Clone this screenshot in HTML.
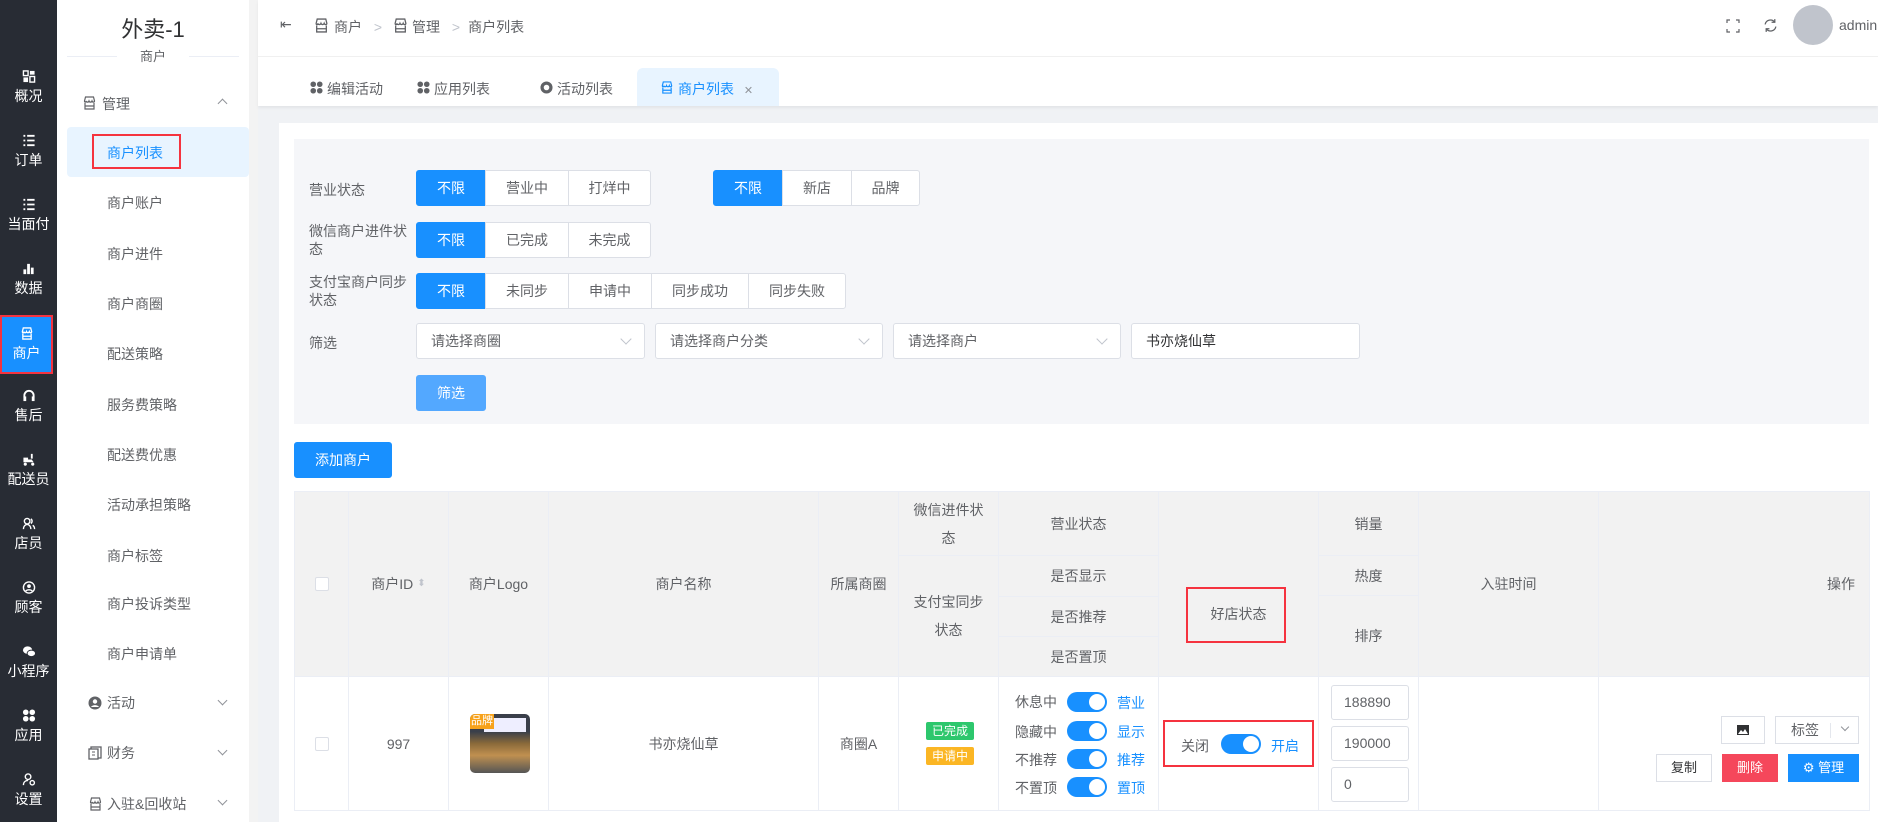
<!DOCTYPE html>
<html><head><meta charset="utf-8"><style>
*{box-sizing:border-box;margin:0;padding:0}
body{width:1878px;height:822px;overflow:hidden;background:#f0f2f5;font-family:"Liberation Sans","Noto Sans CJK SC",sans-serif;font-size:14px;color:#606266;position:relative}
.a{position:absolute}
.side{left:0;top:0;width:57px;height:822px;background:#282c34}
.si{position:absolute;left:0;width:57px;text-align:center;color:#fff;font-size:14px}
.si .ic{display:block;margin:0 auto 3px;width:14px;height:13px}
.sub{left:57px;top:0;width:192px;height:822px;background:#fff}
.mi{position:absolute;left:107px;color:#606266;font-size:14px}
.btn{position:absolute;height:36px;border:1px solid #dcdfe6;background:#fff;color:#606266;text-align:center;line-height:34px;font-size:14px}
.btn.on{background:#1890ff;border-color:#1890ff;color:#fff}
.sel{position:absolute;top:323px;height:36px;border:1px solid #dcdfe6;background:#fff;border-radius:3px;padding-left:14px;line-height:34px;color:#606266}
.sel.c:after{content:"";position:absolute;right:14px;top:11px;width:7px;height:7px;border-right:1px solid #c0c4cc;border-bottom:1px solid #c0c4cc;transform:rotate(45deg)}
.th{position:absolute;background:#f2f2f2;border-right:1px solid #ebeef5;border-bottom:1px solid #ebeef5;display:flex;align-items:center;justify-content:center;text-align:center;color:#606266;line-height:28px}
.td{position:absolute;border-right:1px solid #ebeef5;border-bottom:1px solid #ebeef5;background:#fff;display:flex;align-items:center;justify-content:center}
.sw{position:absolute;width:40px;height:20px;border-radius:10px;background:#1890ff}
.sw:after{content:"";position:absolute;right:2px;top:2px;width:16px;height:16px;border-radius:50%;background:#fff}
.blue{color:#1890ff}
.inp{position:absolute;left:1331px;width:78px;height:35px;border:1px solid #dcdfe6;border-radius:3px;padding-left:12px;line-height:33px;color:#606266;background:#fff}
.red{position:absolute;border:2px solid #f5333f}
</style></head><body>
<div class="a side">
 <div class="si" style="top:70px"><svg class="ic" viewBox="0 0 14 14"><rect x="1" y="1" width="5" height="5" fill="none" stroke="#fff" stroke-width="1.5"/><rect x="8" y="1" width="5" height="4" fill="#fff"/><rect x="1" y="8" width="5" height="5" fill="#fff"/><rect x="8" y="7" width="5" height="6" fill="none" stroke="#fff" stroke-width="1.5"/></svg>概况</div>
 <div class="si" style="top:134px"><svg class="ic" viewBox="0 0 14 14"><path d="M1 2h2M5 2h8M1 7h2M5 7h8M1 12h2M5 12h8" stroke="#fff" stroke-width="2"/></svg>订单</div>
 <div class="si" style="top:198px"><svg class="ic" viewBox="0 0 14 14"><path d="M1 2h2M5 2h8M1 7h2M5 7h8M1 12h2M5 12h8" stroke="#fff" stroke-width="2"/></svg>当面付</div>
 <div class="si" style="top:262px"><svg class="ic" viewBox="0 0 14 14"><path d="M1 13V8h3v5zM5 13V2h3v11zM9 13V6h3v7z" fill="#fff"/></svg>数据</div>
 <div class="a" style="left:0;top:315px;width:53px;height:59px;background:#1890ff;border:2px solid #f5333f"></div>
 <div class="si" style="top:327px;width:53px"><svg class="ic" viewBox="0 0 14 14"><path d="M2 5l1-4h8l1 4c0 1.5-2 1.5-2.5 0c-.5 1.5-2.5 1.5-3 0c-.5 1.5-2.5 1.5-3 0C3.5 6.5 2 6.5 2 5zM2.5 7v6h9V7M2.5 10h9" fill="none" stroke="#fff" stroke-width="1.4"/></svg>商户</div>
 <div class="si" style="top:389px"><svg class="ic" viewBox="0 0 14 14"><path d="M2 9V7a5 5 0 0 1 10 0v2" fill="none" stroke="#fff" stroke-width="2"/><rect x="1" y="8" width="3" height="5" fill="#fff"/><rect x="10" y="8" width="3" height="5" fill="#fff"/></svg>售后</div>
 <div class="si" style="top:453px"><svg class="ic" viewBox="0 0 14 14"><path d="M1 5h5v5H1zM6 7h4l2 3H6zM9 1h2v5H9z" fill="#fff"/><circle cx="3" cy="12" r="1.7" fill="#fff"/><circle cx="11" cy="12" r="1.7" fill="#fff"/></svg>配送员</div>
 <div class="si" style="top:517px"><svg class="ic" viewBox="0 0 14 14"><circle cx="5" cy="4.5" r="3" fill="none" stroke="#fff" stroke-width="1.5"/><path d="M1 13c0-3 2-5 4-5s4 2 4 5M9 2a3 3 0 0 1 0 5M11 9c1.5 1 2 2.5 2 4" fill="none" stroke="#fff" stroke-width="1.5"/></svg>店员</div>
 <div class="si" style="top:581px"><svg class="ic" viewBox="0 0 14 14"><circle cx="7" cy="7" r="6" fill="none" stroke="#fff" stroke-width="1.5"/><circle cx="7" cy="5.5" r="2" fill="#fff"/><path d="M3.5 11c1-2 6-2 7 0" stroke="#fff" stroke-width="1.5" fill="none"/></svg>顾客</div>
 <div class="si" style="top:645px"><svg class="ic" viewBox="0 0 14 14"><ellipse cx="5.5" cy="5.5" rx="5" ry="4" fill="#fff"/><ellipse cx="9.5" cy="9" rx="4.5" ry="3.5" fill="#fff" stroke="#282c34"/></svg>小程序</div>
 <div class="si" style="top:709px"><svg class="ic" viewBox="0 0 14 14"><circle cx="3.5" cy="3.5" r="3" fill="#fff"/><circle cx="10.5" cy="3.5" r="3" fill="#fff"/><circle cx="3.5" cy="10.5" r="3" fill="#fff"/><circle cx="10.5" cy="10.5" r="3" fill="#fff"/></svg>应用</div>
 <div class="si" style="top:773px"><svg class="ic" viewBox="0 0 14 14"><circle cx="6" cy="4" r="3" fill="none" stroke="#fff" stroke-width="1.5"/><path d="M1 13c0-3 2-5 5-5" fill="none" stroke="#fff" stroke-width="1.5"/><circle cx="10.5" cy="10.5" r="2.3" fill="none" stroke="#fff" stroke-width="1.5"/></svg>设置</div>
</div>
<div class="a sub">
 <div class="a" style="left:0;top:12px;width:192px;text-align:center;font-size:22px;color:#303133">外卖-1</div>
 <div class="a" style="left:10px;top:56px;width:172px;height:1px;background:#ebeef5"></div>
 <div class="a" style="left:60px;top:46px;width:72px;text-align:center;background:#fff;color:#606266;font-size:13px">商户</div>
</div>
<div class="a" style="left:249px;top:0;width:9px;height:822px;background:#f3f3f3"></div>
<svg class="a" style="left:82px;top:96px" width="15" height="14" viewBox="0 0 14 14"><path d="M2 5l1-4h8l1 4c0 1.5-2 1.5-2.5 0c-.5 1.5-2.5 1.5-3 0c-.5 1.5-2.5 1.5-3 0C3.5 6.5 2 6.5 2 5zM2.5 7v6h9V7M2.5 10h9" fill="none" stroke="#606266" stroke-width="1.2"/></svg>
<div class="mi" style="left:102px;top:94px">管理</div>
<div class="a" style="left:219px;top:100px;width:7px;height:7px;border-left:1px solid #909399;border-top:1px solid #909399;transform:rotate(45deg)"></div>
<div class="a" style="left:67px;top:127px;width:182px;height:50px;background:#e8f4ff;border-radius:4px"></div>
<div class="mi blue" style="top:143px">商户列表</div>
<div class="red" style="left:92px;top:134px;width:89px;height:35px"></div>
<div class="mi" style="top:193px">商户账户</div>
<div class="mi" style="top:244px">商户进件</div>
<div class="mi" style="top:294px">商户商圈</div>
<div class="mi" style="top:344px">配送策略</div>
<div class="mi" style="top:395px">服务费策略</div>
<div class="mi" style="top:445px">配送费优惠</div>
<div class="mi" style="top:495px">活动承担策略</div>
<div class="mi" style="top:546px">商户标签</div>
<div class="mi" style="top:594px">商户投诉类型</div>
<div class="mi" style="top:644px">商户申请单</div>
<svg class="a" style="left:88px;top:696px" width="14" height="14" viewBox="0 0 14 14"><circle cx="7" cy="7" r="6.5" fill="#606266"/><circle cx="7" cy="5.5" r="2.2" fill="#fff"/><path d="M3 11c1.5-2.5 6.5-2.5 8 0" fill="#fff"/></svg>
<div class="mi" style="left:107px;top:693px">活动</div>
<div class="mi" style="left:107px;top:743px">财务</div>
<div class="mi" style="left:107px;top:794px">入驻&amp;回收站</div>
<svg class="a" style="left:88px;top:746px" width="14" height="14" viewBox="0 0 14 14"><rect x="3" y="1" width="10" height="11" fill="none" stroke="#606266" stroke-width="1.3"/><rect x="1" y="3" width="9" height="10" fill="#fff" stroke="#606266" stroke-width="1.3"/><path d="M4 6h3M4 9h3" stroke="#606266"/></svg>
<svg class="a" style="left:88px;top:797px" width="15" height="14" viewBox="0 0 14 14"><path d="M2 5l1-4h8l1 4c0 1.5-2 1.5-2.5 0c-.5 1.5-2.5 1.5-3 0c-.5 1.5-2.5 1.5-3 0C3.5 6.5 2 6.5 2 5zM2.5 7v6h9V7M2.5 10h9" fill="none" stroke="#606266" stroke-width="1.2"/></svg>
<div class="a" style="left:219px;top:697px;width:7px;height:7px;border-right:1px solid #909399;border-bottom:1px solid #909399;transform:rotate(45deg)"></div>
<div class="a" style="left:219px;top:747px;width:7px;height:7px;border-right:1px solid #909399;border-bottom:1px solid #909399;transform:rotate(45deg)"></div>
<div class="a" style="left:219px;top:797px;width:7px;height:7px;border-right:1px solid #909399;border-bottom:1px solid #909399;transform:rotate(45deg)"></div>

<div class="a" style="left:258px;top:0;width:1620px;height:106px;background:#fff;box-shadow:0 2px 3px rgba(0,0,0,.06)"></div>
<div class="a" style="left:258px;top:56px;width:1620px;height:1px;background:#f0f0f0"></div>
<div class="a" style="left:280px;top:16px;font-size:14px;color:#606266">⇤</div>
<svg class="a" style="left:314px;top:18px" width="15" height="15" viewBox="0 0 14 14"><path d="M2 5l1-4h8l1 4c0 1.5-2 1.5-2.5 0c-.5 1.5-2.5 1.5-3 0c-.5 1.5-2.5 1.5-3 0C3.5 6.5 2 6.5 2 5zM2.5 7v6h9V7M2.5 10h9" fill="none" stroke="#606266" stroke-width="1.2"/></svg>
<div class="a" style="left:334px;top:17px;color:#606266">商户 <span style="color:#c0c4cc;margin:0 8px">&gt;</span></div>
<svg class="a" style="left:393px;top:18px" width="15" height="15" viewBox="0 0 14 14"><path d="M2 5l1-4h8l1 4c0 1.5-2 1.5-2.5 0c-.5 1.5-2.5 1.5-3 0c-.5 1.5-2.5 1.5-3 0C3.5 6.5 2 6.5 2 5zM2.5 7v6h9V7M2.5 10h9" fill="none" stroke="#606266" stroke-width="1.2"/></svg>
<div class="a" style="left:412px;top:17px;color:#606266">管理 <span style="color:#c0c4cc;margin:0 8px">&gt;</span>商户列表</div>
<svg class="a" style="left:1726px;top:19px" width="14" height="14" viewBox="0 0 14 14"><path d="M1 4V1h3M10 1h3v3M13 10v3h-3M4 13H1v-3" fill="none" stroke="#606266" stroke-width="1.2"/></svg>
<svg class="a" style="left:1763px;top:18px" width="15" height="15" viewBox="0 0 14 14"><path d="M2 6a5 5 0 0 1 9-2M12 8a5 5 0 0 1-9 2" fill="none" stroke="#606266" stroke-width="1.2"/><path d="M11 1v3H8M3 13v-3h3" fill="none" stroke="#606266" stroke-width="1.2"/></svg>
<div class="a" style="left:1793px;top:5px;width:40px;height:40px;border-radius:50%;background:#c0c4cc"></div>
<div class="a" style="left:1839px;top:17px;color:#606266;font-size:14px">admin</div>
<svg class="a" style="left:310px;top:81px" width="13" height="13" viewBox="0 0 14 14"><circle cx="3.5" cy="3.5" r="3" fill="#606266"/><circle cx="10.5" cy="3.5" r="3" fill="#606266"/><circle cx="3.5" cy="10.5" r="3" fill="#606266"/><circle cx="10.5" cy="10.5" r="3" fill="#606266"/></svg>
<div class="a" style="left:327px;top:79px;color:#606266">编辑活动</div>
<svg class="a" style="left:417px;top:81px" width="13" height="13" viewBox="0 0 14 14"><circle cx="3.5" cy="3.5" r="3" fill="#606266"/><circle cx="10.5" cy="3.5" r="3" fill="#606266"/><circle cx="3.5" cy="10.5" r="3" fill="#606266"/><circle cx="10.5" cy="10.5" r="3" fill="#606266"/></svg>
<div class="a" style="left:434px;top:79px;color:#606266">应用列表</div>
<svg class="a" style="left:540px;top:81px" width="13" height="13" viewBox="0 0 14 14"><circle cx="7" cy="7" r="6.5" fill="#606266"/><circle cx="7" cy="7" r="3" fill="#fff"/></svg>
<div class="a" style="left:557px;top:79px;color:#606266">活动列表</div>
<div class="a" style="left:637px;top:68px;width:142px;height:38px;background:#e8f4ff;border-radius:6px 6px 0 0"></div>
<svg class="a" style="left:660px;top:81px" width="14" height="13" viewBox="0 0 14 14"><path d="M2 5l1-4h8l1 4c0 1.5-2 1.5-2.5 0c-.5 1.5-2.5 1.5-3 0c-.5 1.5-2.5 1.5-3 0C3.5 6.5 2 6.5 2 5zM2.5 7v6h9V7M2.5 10h9" fill="none" stroke="#1890ff" stroke-width="1.3"/></svg>
<div class="a blue" style="left:678px;top:79px">商户列表 <span style="font-size:11px;margin-left:6px;color:#909399">✕</span></div>

<div class="a" style="left:279px;top:123px;width:1599px;height:699px;background:#fff"></div>
<div class="a" style="left:294px;top:139px;width:1575px;height:285px;background:#f5f6f9"></div>
<div class="a" style="left:309px;top:180px">营业状态</div>
<div class="btn on" style="left:416px;top:170px;width:70px;border-radius:3px 0 0 3px">不限</div>
<div class="btn" style="left:485px;top:170px;width:84px">营业中</div>
<div class="btn" style="left:568px;top:170px;width:83px;border-radius:0 3px 3px 0">打烊中</div>
<div class="btn on" style="left:713px;top:170px;width:70px;border-radius:3px 0 0 3px">不限</div>
<div class="btn" style="left:782px;top:170px;width:70px">新店</div>
<div class="btn" style="left:851px;top:170px;width:69px;border-radius:0 3px 3px 0">品牌</div>
<div class="a" style="left:309px;top:222px;width:105px;line-height:18px">微信商户进件状态</div>
<div class="btn on" style="left:416px;top:222px;width:70px;border-radius:3px 0 0 3px">不限</div>
<div class="btn" style="left:485px;top:222px;width:84px">已完成</div>
<div class="btn" style="left:568px;top:222px;width:83px;border-radius:0 3px 3px 0">未完成</div>
<div class="a" style="left:309px;top:273px;width:105px;line-height:18px">支付宝商户同步状态</div>
<div class="btn on" style="left:416px;top:273px;width:70px;border-radius:3px 0 0 3px">不限</div>
<div class="btn" style="left:485px;top:273px;width:84px">未同步</div>
<div class="btn" style="left:568px;top:273px;width:84px">申请中</div>
<div class="btn" style="left:651px;top:273px;width:98px">同步成功</div>
<div class="btn" style="left:748px;top:273px;width:98px;border-radius:0 3px 3px 0">同步失败</div>
<div class="a" style="left:309px;top:333px">筛选</div>
<div class="sel c" style="left:416px;width:229px">请选择商圈</div>
<div class="sel c" style="left:655px;width:228px">请选择商户分类</div>
<div class="sel c" style="left:893px;width:228px">请选择商户</div>
<div class="sel" style="left:1131px;width:229px;color:#303133">书亦烧仙草</div>
<div class="btn" style="left:416px;top:375px;width:70px;background:#53a8ff;border-color:#53a8ff;color:#fff;border-radius:3px">筛选</div>
<div class="btn on" style="left:294px;top:442px;width:98px;border-radius:3px">添加商户</div>

<div class="a" style="left:294px;top:491px;width:1576px;height:1px;background:#ebeef5"></div>
<div class="th" style="left:294px;top:492px;width:55px;height:185px;border-left:1px solid #ebeef5"><span style="width:14px;height:14px;border:1px solid #dcdfe6;background:#fff;border-radius:2px"></span></div>
<div class="th" style="left:349px;top:492px;width:100px;height:185px">商户ID <span style="color:#c0c4cc;font-size:10px;margin-left:4px">⬍</span></div>
<div class="th" style="left:449px;top:492px;width:100px;height:185px">商户Logo</div>
<div class="th" style="left:549px;top:492px;width:270px;height:185px">商户名称</div>
<div class="th" style="left:819px;top:492px;width:80px;height:185px">所属商圈</div>
<div class="th" style="left:899px;top:492px;width:100px;height:64px">微信进件状<br>态</div>
<div class="th" style="left:899px;top:556px;width:100px;height:121px">支付宝同步<br>状态</div>
<div class="th" style="left:999px;top:492px;width:160px;height:64px">营业状态</div>
<div class="th" style="left:999px;top:556px;width:160px;height:41px">是否显示</div>
<div class="th" style="left:999px;top:597px;width:160px;height:40px">是否推荐</div>
<div class="th" style="left:999px;top:637px;width:160px;height:40px">是否置顶</div>
<div class="th" style="left:1159px;top:492px;width:160px;height:185px;padding-top:60px">好店状态</div>
<div class="th" style="left:1319px;top:492px;width:100px;height:64px">销量</div>
<div class="th" style="left:1319px;top:556px;width:100px;height:40px">热度</div>
<div class="th" style="left:1319px;top:596px;width:100px;height:81px">排序</div>
<div class="th" style="left:1419px;top:492px;width:180px;height:185px">入驻时间</div>
<div class="th" style="left:1599px;top:492px;width:271px;height:185px;justify-content:flex-end;padding-right:14px">操作</div>
<div class="red" style="left:1186px;top:587px;width:100px;height:56px"></div>

<div class="td" style="left:294px;top:677px;width:55px;height:134px;border-left:1px solid #ebeef5"><span style="width:14px;height:14px;border:1px solid #dcdfe6;border-radius:2px"></span></div>
<div class="td" style="left:349px;top:677px;width:100px;height:134px">997</div>
<div class="td" style="left:449px;top:677px;width:100px;height:134px"></div>
<div class="a" style="left:470px;top:714px;width:60px;height:59px;border-radius:5px;background:linear-gradient(180deg,#3a3f4a 0,#3a3f4a 30%,#8a6a3a 50%,#c09050 70%,#555 100%);overflow:hidden">
 <div style="position:absolute;left:14px;top:4px;width:42px;height:14px;background:#eef;"></div>
 <div style="position:absolute;left:0;top:0;width:24px;height:15px;background:#f7a21b;color:#fff;font-size:11px;line-height:15px;text-align:center">品牌</div>
</div>
<div class="td" style="left:549px;top:677px;width:270px;height:134px">书亦烧仙草</div>
<div class="td" style="left:819px;top:677px;width:80px;height:134px">商圈A</div>
<div class="td" style="left:899px;top:677px;width:100px;height:134px"></div>
<div class="a" style="left:926px;top:722px;width:48px;height:18px;background:#2dc76d;color:#fff;font-size:12px;line-height:18px;text-align:center;border-radius:2px">已完成</div>
<div class="a" style="left:926px;top:747px;width:48px;height:18px;background:#fbb624;color:#fff;font-size:12px;line-height:18px;text-align:center;border-radius:2px">申请中</div>
<div class="td" style="left:999px;top:677px;width:160px;height:134px"></div>
<div class="a" style="left:1015px;top:693px;line-height:18px">休息中</div><div class="sw" style="left:1067px;top:692px"></div><div class="a blue" style="left:1117px;top:693px">营业</div>
<div class="a" style="left:1015px;top:722px">隐藏中</div><div class="sw" style="left:1067px;top:721px"></div><div class="a blue" style="left:1117px;top:722px">显示</div>
<div class="a" style="left:1015px;top:750px">不推荐</div><div class="sw" style="left:1067px;top:749px"></div><div class="a blue" style="left:1117px;top:750px">推荐</div>
<div class="a" style="left:1015px;top:778px">不置顶</div><div class="sw" style="left:1067px;top:777px"></div><div class="a blue" style="left:1117px;top:778px">置顶</div>
<div class="td" style="left:1159px;top:677px;width:160px;height:134px"></div>
<div class="red" style="left:1163px;top:720px;width:151px;height:47px"></div>
<div class="a" style="left:1181px;top:736px">关闭</div><div class="sw" style="left:1221px;top:734px"></div><div class="a blue" style="left:1271px;top:736px">开启</div>
<div class="td" style="left:1319px;top:677px;width:100px;height:134px"></div>
<div class="inp" style="top:685px">188890</div>
<div class="inp" style="top:726px">190000</div>
<div class="inp" style="top:767px">0</div>
<div class="td" style="left:1419px;top:677px;width:180px;height:134px"></div>
<div class="td" style="left:1599px;top:677px;width:271px;height:134px"></div>
<div class="a" style="left:1721px;top:716px;width:44px;height:28px;border:1px solid #dcdfe6;display:flex;align-items:center;justify-content:center"><svg width="12" height="10" viewBox="0 0 12 10"><rect width="12" height="10" fill="#303133"/><path d="M1 9l3-4 2 2 2-3 3 5z" fill="#fff"/></svg></div>
<div class="a" style="left:1775px;top:716px;width:84px;height:28px;border:1px solid #dcdfe6;line-height:26px;padding-left:15px;color:#606266">标签<span style="position:absolute;left:54px;top:6px;width:1px;height:15px;background:#e4e7ed"></span><span style="position:absolute;left:66px;top:7px;width:6px;height:6px;border-right:1px solid #909399;border-bottom:1px solid #909399;transform:rotate(45deg)"></span></div>
<div class="a" style="left:1656px;top:754px;width:56px;height:28px;border:1px solid #dcdfe6;line-height:26px;text-align:center;font-size:13px;color:#303133">复制</div>
<div class="a" style="left:1722px;top:754px;width:56px;height:28px;background:#f5475b;line-height:28px;text-align:center;font-size:13px;color:#fff">删除</div>
<div class="a" style="left:1788px;top:754px;width:71px;height:28px;background:#1890ff;line-height:28px;text-align:center;font-size:13px;color:#fff">⚙ 管理</div>
</body></html>
